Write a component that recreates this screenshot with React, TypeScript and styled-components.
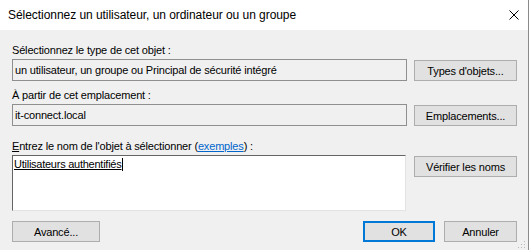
import React from "react";
import styled, { createGlobalStyle } from "styled-components";

const GlobalStyle = createGlobalStyle`
    html, body {
        margin: 0;
        padding: 0;
        background: #ffffff;
    }
    body {
        font-family: "Liberation Sans", Arial, sans-serif;
        font-size: 11px;
        color: #000000;
    }
`;

const Window = styled.div`
    width: 528px;
    height: 250px;
    border-right: 1px solid #8a8a8a;
    display: flex;
    flex-direction: column;
    background: #f0f0f0;
    position: relative;
`;

const TitleBar = styled.div`
    height: 30px;
    background: #ffffff;
    display: flex;
    align-items: center;
    justify-content: space-between;
    padding: 0 9px 0 8px;
`;

const Title = styled.span`
    font-family: "Liberation Sans", Arial, sans-serif;
    font-size: 12px;
    letter-spacing: -0.05px;
    color: #000000;
    margin-top: -1px;
`;

const CloseIcon = styled.svg`
    width: 10px;
    height: 10px;
`;

const Body = styled.div`
    flex: 1;
    padding: 0 11px 0 12px;
    display: flex;
    flex-direction: column;
`;

const Label = styled.div<{ $top: number }>`
    height: 13px;
    line-height: 13px;
    margin-top: ${(p) => p.$top}px;
    margin-bottom: 2px;
    letter-spacing: -0.17px;
    white-space: nowrap;
`;

const Row = styled.div`
    display: flex;
    align-items: flex-start;
    gap: 7px;
`;

const Field = styled.div`
    width: 395px;
    height: 22px;
    box-sizing: border-box;
    border: 1px solid #8f8f8f;
    background: #f0f0f0;
    padding: 0 2px;
    line-height: 20px;
    letter-spacing: -0.17px;
    white-space: nowrap;
    overflow: hidden;
`;

const NameBox = styled.div`
    width: 394px;
    height: 56px;
    box-sizing: border-box;
    border-top: 1px solid #646464;
    border-left: 1px solid #646464;
    border-right: 1px solid #e3e3e3;
    border-bottom: 1px solid #e3e3e3;
    background: #ffffff;
    padding: 2px 1px;
`;

const Resolved = styled.span`
    display: inline-block;
    line-height: 13px;
    letter-spacing: -0.25px;
    text-decoration: underline;
    text-underline-offset: 1px;
    border-right: 1px solid #000000;
    padding-right: 1px;
`;

const Button = styled.button<{ $width: number; $primary?: boolean; $offset?: number }>`
    width: ${(p) => p.$width}px;
    height: 21px;
    margin-top: ${(p) => p.$offset ?? 0}px;
    box-sizing: border-box;
    border: ${(p) => (p.$primary ? "2px solid #0078d7" : "1px solid #adadad")};
    background: #e1e1e1;
    font-family: "Liberation Sans", Arial, sans-serif;
    font-size: 11px;
    letter-spacing: -0.17px;
    color: #000000;
    padding: 0;
    white-space: nowrap;
`;

const Link = styled.span`
    color: #0066cc;
    text-decoration: underline;
`;

const Mnemonic = styled.span`
    text-decoration: underline;
`;

const Footer = styled.div`
    display: flex;
    align-items: center;
    margin-top: 10px;
`;

const Spacer = styled.div`
    flex: 1;
`;

const FooterRight = styled.div`
    display: flex;
    gap: 9px;
`;

const Grip = styled.svg`
    position: absolute;
    right: 2px;
    bottom: 1px;
    width: 9px;
    height: 9px;
`;

export default function App() {
    return (
        <>
            <GlobalStyle />
            <Window>
                <TitleBar>
                    <Title>Sélectionnez un utilisateur, un ordinateur ou un groupe</Title>
                    <CloseIcon viewBox="0 0 10 10">
                        <path d="M0.5 0.5 L9.5 9.5 M9.5 0.5 L0.5 9.5" stroke="#000" strokeWidth="1" fill="none" />
                    </CloseIcon>
                </TitleBar>
                <Body>
                    <Label $top={14}>Sélectionnez le type de cet objet :</Label>
                    <Row>
                        <Field>un utilisateur, un groupe ou Principal de sécurité intégré</Field>
                        <Button $width={103} $offset={1}>Types d'objets...</Button>
                    </Row>
                    <Label $top={8}>À partir de cet emplacement :</Label>
                    <Row>
                        <Field>it-connect.local</Field>
                        <Button $width={103} $offset={1}>Emplacements...</Button>
                    </Row>
                    <Label $top={14}>
                        <Mnemonic>E</Mnemonic>ntrez le nom de l'objet à sélectionner (<Link>exemples</Link>) :
                    </Label>
                    <Row>
                        <NameBox>
                            <Resolved>Utilisateurs authentifiés</Resolved>
                        </NameBox>
                        <Button $width={103} $offset={1} style={{ marginLeft: 1 }}>Vérifier les noms</Button>
                    </Row>
                    <Footer>
                        <Button $width={88}>Avancé...</Button>
                        <Spacer />
                        <FooterRight>
                            <Button $width={72} $primary>OK</Button>
                            <Button $width={73}>Annuler</Button>
                        </FooterRight>
                    </Footer>
                </Body>
                <Grip viewBox="0 0 9 9">
                    <rect x="7" y="1" width="1" height="1" fill="#b8b8b8" />
                    <rect x="4" y="4" width="1" height="1" fill="#b8b8b8" />
                    <rect x="7" y="4" width="1" height="1" fill="#b8b8b8" />
                    <rect x="1" y="7" width="1" height="1" fill="#b8b8b8" />
                    <rect x="4" y="7" width="1" height="1" fill="#b8b8b8" />
                    <rect x="7" y="7" width="1" height="1" fill="#b8b8b8" />
                </Grip>
            </Window>
        </>
    );
}
